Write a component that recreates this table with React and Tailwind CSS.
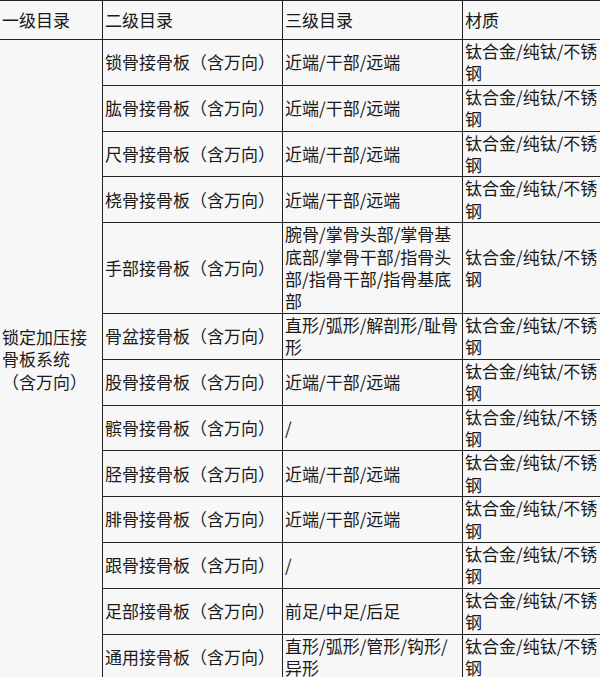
const rows = [
  ["锁骨接骨板（含万向）", "近端/干部/远端"],
  ["肱骨接骨板（含万向）", "近端/干部/远端"],
  ["尺骨接骨板（含万向）", "近端/干部/远端"],
  ["桡骨接骨板（含万向）", "近端/干部/远端"],
  ["手部接骨板（含万向）", "腕骨/掌骨头部/掌骨基底部/掌骨干部/指骨头部/指骨干部/指骨基底部"],
  ["骨盆接骨板（含万向）", "直形/弧形/解剖形/耻骨形"],
  ["股骨接骨板（含万向）", "近端/干部/远端"],
  ["髌骨接骨板（含万向）", "/"],
  ["胫骨接骨板（含万向）", "近端/干部/远端"],
  ["腓骨接骨板（含万向）", "近端/干部/远端"],
  ["跟骨接骨板（含万向）", "/"],
  ["足部接骨板（含万向）", "前足/中足/后足"],
  ["通用接骨板（含万向）", "直形/弧形/管形/钩形/异形"],
];

const cell = "border border-[#222] pl-[2px] align-middle";

export default function App() {
  return (
    <div
      className="w-[600px] h-[677px] overflow-hidden bg-[#f7f7f7] text-[#1a1a1a] text-[17px] leading-[22.4px]"
      style={{ fontFamily: '"Noto Sans CJK SC", "Noto Sans", sans-serif' }}
    >
      <table className="-ml-px table-fixed border-collapse w-[605px]">
        <colgroup>
          <col className="w-[103px]" />
          <col className="w-[180px]" />
          <col className="w-[180px]" />
          <col className="w-[142px]" />
        </colgroup>
        <thead>
          <tr className="h-[39px]">
            <th className={`${cell} font-normal text-left`}>一级目录</th>
            <th className={`${cell} font-normal text-left`}>二级目录</th>
            <th className={`${cell} font-normal text-left`}>三级目录</th>
            <th className={`${cell} font-normal text-left`}>材质</th>
          </tr>
        </thead>
        <tbody>
          {rows.map(([name, part], i) => (
            <tr key={name}>
              {i === 0 && (
                <td rowSpan={rows.length} className={`${cell} pr-[8px]`}>
                  锁定加压接骨板系统（含万向）
                </td>
              )}
              <td className={cell}>{name}</td>
              <td className={`${cell} pr-[1px]`}>{part}</td>
              <td className={cell}>钛合金/纯钛/不锈钢</td>
            </tr>
          ))}
        </tbody>
      </table>
    </div>
  );
}
